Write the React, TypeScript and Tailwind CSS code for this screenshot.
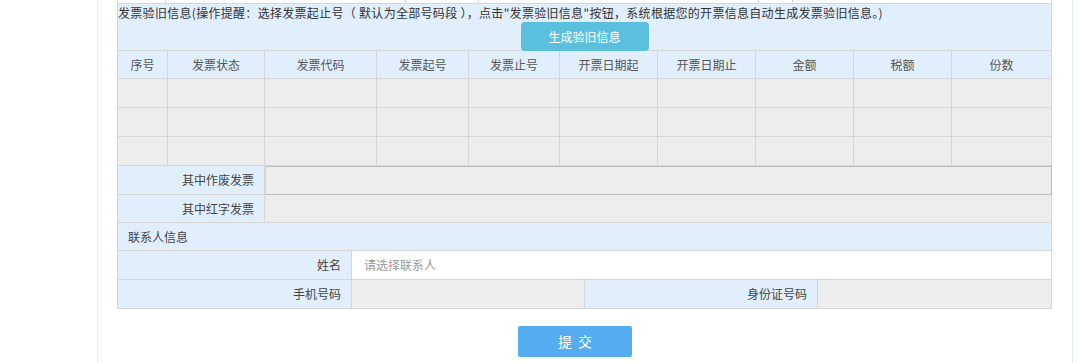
import React from 'react';

const cols = 'grid grid-cols-[50px_97px_112px_92px_91px_98px_98px_98px_98px_100px]';
const headers = ['序号', '发票状态', '发票代码', '发票起号', '发票止号', '开票日期起', '开票日期止', '金额', '税额', '份数'];

const GrayRow: React.FC = () => (
  <div className={`${cols} h-[29px]`}>
    {headers.map((h) => (
      <div key={h} className="bg-[#ededed] border-r border-b border-[#d6d6d6]" />
    ))}
  </div>
);

export default function App() {
  return (
    <div
      className="w-[1080px] h-[363px] bg-white overflow-hidden text-[12px] text-[#333]"
      style={{ fontFamily: '"Noto Sans CJK SC", "Noto Sans", sans-serif' }}
    >
      <div className="ml-[97px] w-[976px] h-full border-l border-r border-[#e3edf8] px-[19px]">
        <div className="w-[935px] border-l border-[#d6d6d6]">
          {/* previous row, cut off at the top */}
          <div className="flex h-[4px] border-b border-[#d6d6d6]">
            <div className="w-[48px] border-r border-[#d6d6d6]" />
            <div className="w-[240px] border-r border-[#d6d6d6]" />
            <div className="w-[73px] border-r border-[#d6d6d6]" />
            <div className="w-[280px] border-r border-[#d6d6d6]" />
            <div className="w-[34px] border-r border-[#d6d6d6]" />
            <div className="flex-1 border-r border-[#d6d6d6]" />
          </div>

          {/* info + generate button */}
          <div className="h-[47px] bg-[#e1effd] border-r border-b border-[#d6d6d6] flex flex-col">
            <div className="leading-[16px] pt-[1px] whitespace-nowrap tracking-[0.3px]">
              发票验旧信息(操作提醒：选择发票起止号（ 默认为全部号码段 ），点击"发票验旧信息"按钮，系统根据您的开票信息自动生成发票验旧信息。)
            </div>
            <div className="flex justify-center mt-[1px]">
              <button className="w-[128px] h-[29px] rounded-[4px] bg-[#5bc0de] text-white text-[12px]">
                生成验旧信息
              </button>
            </div>
          </div>

          {/* header row */}
          <div className={`${cols} h-[28px]`}>
            {headers.map((h) => (
              <div
                key={h}
                className="bg-[#e1effd] border-r border-b border-[#d6d6d6] flex items-center justify-center text-[#555]"
              >
                {h}
              </div>
            ))}
          </div>

          <GrayRow />
          <GrayRow />
          <GrayRow />

          {/* 作废 */}
          <div className="flex h-[29px]">
            <div className="w-[147px] bg-[#e1effd] border-r border-b border-[#d6d6d6] flex items-center justify-end pr-[10px] text-[#444]">
              其中作废发票
            </div>
            <div className="flex-1 bg-[#ededed] border border-[#bdbdbd] border-l-[#d6d6d6]" />
          </div>

          {/* 红字 */}
          <div className="flex h-[28px]">
            <div className="w-[147px] bg-[#e1effd] border-r border-b border-[#d6d6d6] flex items-center justify-end pr-[10px] text-[#444]">
              其中红字发票
            </div>
            <div className="flex-1 bg-[#ededed] border-r border-b border-[#d6d6d6]" />
          </div>

          {/* contact heading */}
          <div className="h-[28px] bg-[#e1effd] border-r border-b border-[#d6d6d6] flex items-center pl-[10px] text-[#444]">
            联系人信息
          </div>

          {/* 姓名 */}
          <div className="flex h-[29px]">
            <div className="w-[234px] bg-[#e1effd] border-r border-b border-[#d6d6d6] flex items-center justify-end pr-[10px] text-[#444]">
              姓名
            </div>
            <div className="flex-1 bg-white border-r border-b border-[#d6d6d6] flex items-center pl-[12px] text-[#999]">
              请选择联系人
            </div>
          </div>

          {/* 手机 / 身份证 */}
          <div className="flex h-[29px]">
            <div className="w-[234px] bg-[#e1effd] border-r border-b border-[#d6d6d6] flex items-center justify-end pr-[10px] text-[#444]">
              手机号码
            </div>
            <div className="w-[233px] bg-[#ededed] border-r border-b border-[#d6d6d6]" />
            <div className="w-[233px] bg-[#e1effd] border-r border-b border-[#d6d6d6] flex items-center justify-end pr-[10px] text-[#444]">
              身份证号码
            </div>
            <div className="flex-1 bg-[#ededed] border-r border-b border-[#d6d6d6]" />
          </div>
        </div>

        <div className="flex mt-[17px] pl-[401px]">
          <button className="w-[114px] h-[31px] rounded-[2px] bg-[#55acf1] text-white text-[14px] tracking-[6px] pl-[6px]">
            提交
          </button>
        </div>
      </div>
    </div>
  );
}
